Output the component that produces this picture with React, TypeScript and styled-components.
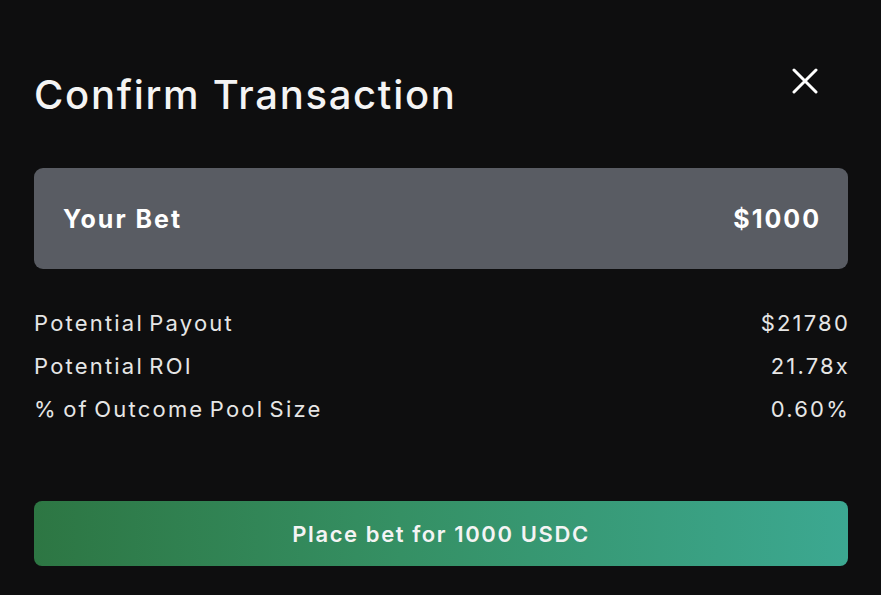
import React from "react";
import styled, { createGlobalStyle } from "styled-components";

const Global = createGlobalStyle`
  html, body { margin: 0; padding: 0; background: #0e0e0f; }
  body { font-family: Inter, "Noto Sans", sans-serif; color: #f2f2f2; }
`;

const Modal = styled.div`
  width: 881px;
  height: 595px;
  box-sizing: border-box;
  padding: 60px 33px 0 34px;
  display: flex;
  flex-direction: column;
  background: #0e0e0f;
`;

const Header = styled.div`
  display: flex;
  align-items: flex-start;
  justify-content: space-between;
  height: 108px;
`;

const Title = styled.h1`
  margin: 10px 0 0;
  font-size: 40px;
  font-weight: 500;
  letter-spacing: 1.7px;
  color: #f4f4f4;
`;

const CloseButton = styled.button`
  background: none;
  border: none;
  padding: 0;
  margin: 6px 28px 0 0;
  width: 30px;
  height: 30px;
  display: flex;
  align-items: center;
  justify-content: center;
  cursor: pointer;
`;

const BetCard = styled.div`
  height: 101px;
  border-radius: 9px;
  background: #595c63;
  display: flex;
  align-items: center;
  justify-content: space-between;
  padding: 0 29px;
  font-size: 25px;
  font-weight: 700;
  letter-spacing: 2px;
  color: #ffffff;
`;

const Details = styled.div`
  display: flex;
  flex-direction: column;
  gap: 15px;
  margin-top: 40px;
`;

const Row = styled.div`
  display: flex;
  justify-content: space-between;
  font-size: 22px;
  line-height: 28px;
  letter-spacing: 2.2px;
  word-spacing: -3px;
  color: #e6e6e6;
`;

const Value = styled.span`
  margin-right: -2px;
`;

const PlaceButton = styled.button`
  margin-top: 78px;
  height: 65px;
  border: none;
  border-radius: 8px;
  background: linear-gradient(90deg, #2d7643 0%, #359064 45%, #3ca891 100%);
  color: #f4f4f4;
  font-family: Inter, "Noto Sans", sans-serif;
  font-size: 22px;
  font-weight: 600;
  letter-spacing: 1.6px;
  cursor: pointer;
`;

export default function App() {
  const rows: [string, string][] = [
    ["Potential Payout", "$21780"],
    ["Potential ROI", "21.78x"],
    ["% of Outcome Pool Size", "0.60%"],
  ];
  return (
    <>
      <Global />
      <Modal>
        <Header>
          <Title>Confirm Transaction</Title>
          <CloseButton aria-label="Close">
            <svg width="26" height="26" viewBox="0 0 26 26">
              <path d="M2 2 L24 24 M24 2 L2 24" stroke="#ffffff" strokeWidth="3" strokeLinecap="round" />
            </svg>
          </CloseButton>
        </Header>
        <BetCard>
          <span>Your Bet</span>
          <Value>$1000</Value>
        </BetCard>
        <Details>
          {rows.map(([k, v]) => (
            <Row key={k}>
              <span>{k}</span>
              <Value>{v}</Value>
            </Row>
          ))}
        </Details>
        <PlaceButton>Place bet for 1000 USDC</PlaceButton>
      </Modal>
    </>
  );
}
